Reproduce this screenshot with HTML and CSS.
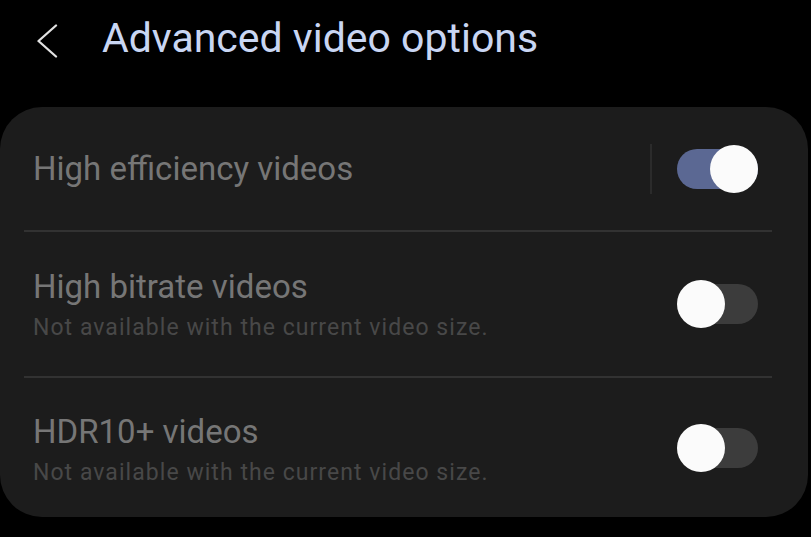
FILE: index.html
```html
<!DOCTYPE html>
<html lang="en">
<head>
<meta charset="utf-8">
<title>Advanced video options</title>
<link rel="stylesheet" href="styles.css">
</head>
<body>
  <header class="appbar">
    <button class="back" aria-label="Back">
      <svg width="24" height="34" viewBox="0 0 24 34"><path d="M21 1.5 L3.5 17 L21 32.5" fill="none" stroke="#e2e2e2" stroke-width="2.3" stroke-linecap="round" stroke-linejoin="round"/></svg>
    </button>
    <h1 class="title">Advanced video options</h1>
  </header>
  <section class="card">
    <div class="row row-first">
      <div class="text">
        <div class="label">High efficiency videos</div>
      </div>
      <div class="vsep"></div>
      <div class="toggle on"><span class="thumb"></span></div>
    </div>
    <div class="divider"></div>
    <div class="row row-second">
      <div class="text">
        <div class="label">High bitrate videos</div>
        <div class="sub">Not available with the current video size.</div>
      </div>
      <div class="toggle"><span class="thumb"></span></div>
    </div>
    <div class="divider"></div>
    <div class="row row-third">
      <div class="text">
        <div class="label">HDR10+ videos</div>
        <div class="sub">Not available with the current video size.</div>
      </div>
      <div class="toggle"><span class="thumb"></span></div>
    </div>
  </section>
</body>
</html>
```
FILE: styles.css
```css
html, body {
  margin: 0;
  padding: 0;
  background: #000;
  width: 811px;
  height: 537px;
  overflow: hidden;
  font-family: Roboto, "Noto Sans", sans-serif;
}
.appbar {
  height: 107px;
  display: flex;
  align-items: flex-start;
  box-sizing: border-box;
  padding: 0 0 0 35px;
}
.back {
  background: none;
  border: 0;
  padding: 0;
  margin: 24px 0 0 0;
  width: 24px;
  height: 34px;
  display: block;
}
.back svg { display: block; }
.title {
  margin: 14px 0 0 43px;
  font-size: 41px;
  font-weight: 400;
  color: #c9d6f3;
  line-height: 48px;
}
.card {
  background: #1c1c1c;
  border-radius: 42px;
  margin-right: 3px;
  height: 410px;
  display: flex;
  flex-direction: column;
}
.row {
  display: flex;
  align-items: center;
  box-sizing: border-box;
  padding: 0 50px 0 33px;
}
.row-first { height: 123px; }
.row-second { height: 144px; }
.row-third { height: 139px; }
.row-second .text { padding-top: 2px; }
.row-third .text { padding-top: 5px; }
.text { flex: 1; }
.label {
  color: #767676;
  font-size: 33px;
  line-height: 36px;
}
.sub {
  color: #484848;
  font-size: 23px;
  line-height: 28px;
  letter-spacing: 1.05px;
  margin-top: 9px;
}
.divider {
  height: 2px;
  background: #323232;
  margin: 0 36px 0 24px;
}
.vsep {
  width: 2px;
  height: 50px;
  background: #2b2b2b;
  margin-right: 25px;
}
.toggle {
  position: relative;
  width: 81px;
  height: 40px;
  border-radius: 20px;
  background: #3c3c3c;
}
.toggle.on { background: #5b6893; }
.thumb {
  position: absolute;
  top: -4px;
  left: 0;
  width: 48px;
  height: 48px;
  border-radius: 50%;
  background: #fbfbfb;
}
.toggle.on .thumb { left: 33px; }
```
